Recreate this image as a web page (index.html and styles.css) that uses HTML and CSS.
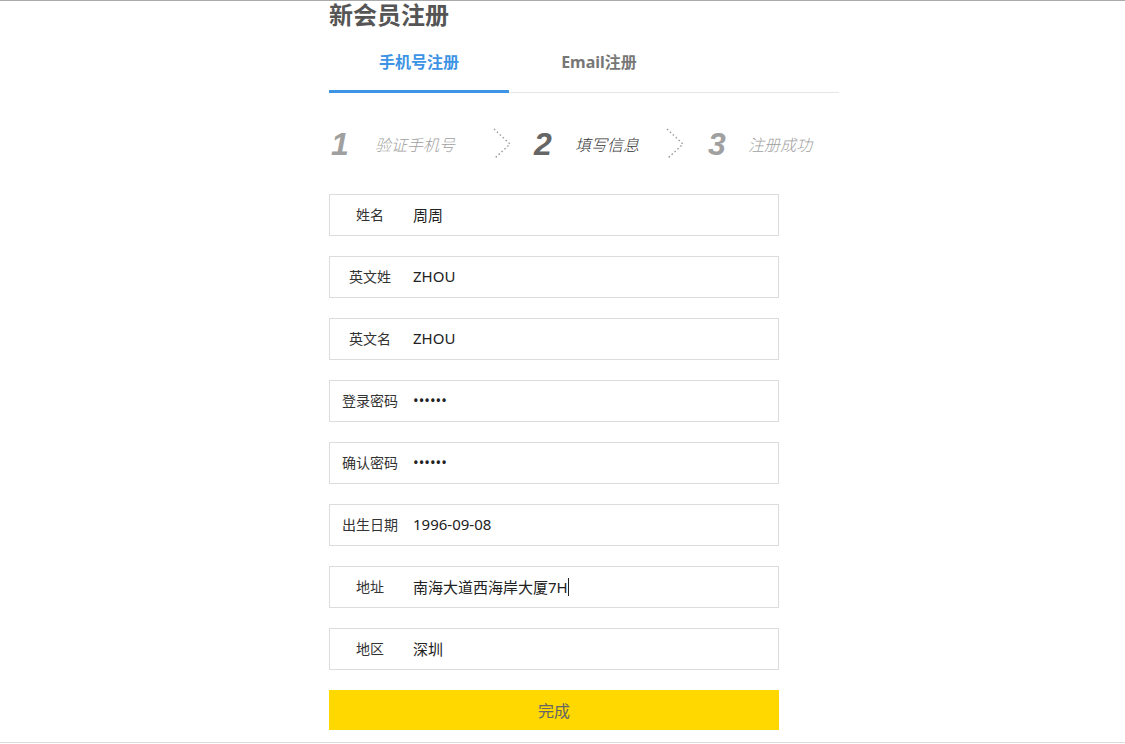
FILE: index.html
```html
<!DOCTYPE html>
<html lang="zh-CN">
<head>
    <meta charset="UTF-8">
    <meta name="viewport" content="width=device-width, initial-scale=1.0">
    <title>新会员注册</title>
    <link rel="stylesheet" href="styles.css">
</head>
<body>
    <div class="page">
        <h1>新会员注册</h1>
        <div class="tabs">
            <a class="tab active">手机号注册</a>
            <a class="tab">Email注册</a>
        </div>
        <div class="steps">
            <div class="step step-1"><span class="num">1</span><span class="label">验证手机号</span></div>
            <svg class="arrow arrow-1" width="18" height="32" viewBox="0 0 18 32">
                <polyline points="1,1 17,16 1,31" fill="none" stroke="#999" stroke-width="1.4" stroke-dasharray="1.5 2.5"/>
            </svg>
            <div class="step step-2 current"><span class="num">2</span><span class="label">填写信息</span></div>
            <svg class="arrow arrow-2" width="18" height="32" viewBox="0 0 18 32">
                <polyline points="1,1 17,16 1,31" fill="none" stroke="#999" stroke-width="1.4" stroke-dasharray="1.5 2.5"/>
            </svg>
            <div class="step step-3"><span class="num">3</span><span class="label">注册成功</span></div>
        </div>
        <form class="reg-form">
            <div class="field"><label>姓名</label><input type="text" value="周周"></div>
            <div class="field"><label>英文姓</label><input type="text" value="ZHOU"></div>
            <div class="field"><label>英文名</label><input type="text" value="ZHOU"></div>
            <div class="field"><label>登录密码</label><input type="password" value="123456"></div>
            <div class="field"><label>确认密码</label><input type="password" value="123456"></div>
            <div class="field"><label>出生日期</label><input type="text" value="1996-09-08"></div>
            <div class="field"><label>地址</label><div class="value">南海大道西海岸大厦7H<span class="caret"></span></div></div>
            <div class="field"><label>地区</label><input type="text" value="深圳"></div>
            <button type="button" class="submit">完成</button>
        </form>
    </div>
    <div class="footer"></div>
</body>
</html>
```

FILE: styles.css
```css
body {
    margin: 0;
    padding: 0;
    border-top: 1px solid #aaa;
    background: #fff;
    font-family: "Noto Sans", "Noto Sans CJK SC", sans-serif;
    color: #333;
}
.page {
    width: 510px;
    margin-left: 329px;
}
h1 {
    margin: 0;
    font-size: 24px;
    line-height: 25px;
    font-weight: bold;
    color: #555;
    font-family: "Noto Sans CJK SC", sans-serif;
}
.tabs {
    display: flex;
    border-bottom: 1px solid #e6e6e6;
}
.tab {
    width: 180px;
    padding: 26px 0 18px;
    line-height: 20px;
    font-size: 16px;
    font-weight: bold;
    text-align: center;
    color: #777;
    border-bottom: 3px solid transparent;
    margin-bottom: -1px;
    cursor: pointer;
}
.tab.active {
    color: #3d93e4;
    border-bottom-color: #3d93e4;
}
.steps {
    display: flex;
    align-items: center;
    height: 32px;
    margin-top: 35px;
}
.step {
    display: flex;
    align-items: center;
    color: #a0a0a0;
}
.step .num {
    width: 46px;
    padding-left: 2px;
    box-sizing: border-box;
    font-family: "Liberation Sans", sans-serif;
    font-size: 32px;
    font-weight: bold;
    font-style: italic;
    line-height: 32px;
}
.step .label {
    font-size: 16px;
    font-style: italic;
    font-weight: 300;
    font-family: "Noto Sans CJK SC", sans-serif;
}
.step.current .num {
    color: #666;
}
.step.current .label {
    color: #333;
}
.arrow-1 {
    margin-left: 38px;
    margin-right: 21px;
}
.arrow-2 {
    margin-left: 27px;
    margin-right: 22px;
}
.step-2 .num {
    width: 43px;
}
.step-3 .num {
    width: 42px;
}
.reg-form {
    margin-top: 34px;
    width: 450px;
}
.field {
    display: flex;
    align-items: center;
    height: 42px;
    box-sizing: border-box;
    border: 1px solid #dcdcdc;
    margin-bottom: 20px;
    padding-bottom: 2px;
}
.field label {
    width: 80px;
    text-align: center;
    font-size: 14px;
    color: #333;
}
.field input, .field .value {
    flex: 1;
    border: none;
    outline: none;
    padding: 0 3px;
    font-family: "Noto Sans", "Noto Sans CJK SC", sans-serif;
    font-size: 15px;
    color: #222;
    background: transparent;
}
.caret {
    display: inline-block;
    width: 1px;
    height: 18px;
    background: #222;
    vertical-align: -3px;
}
.submit {
    display: block;
    width: 450px;
    height: 40px;
    border: none;
    background: #ffd800;
    font-family: "Noto Sans CJK SC", sans-serif;
    font-size: 16px;
    color: #666;
    cursor: pointer;
}
.footer {
    margin-top: 12px;
    border-top: 1px solid #ddd;
    height: 1px;
}
```
